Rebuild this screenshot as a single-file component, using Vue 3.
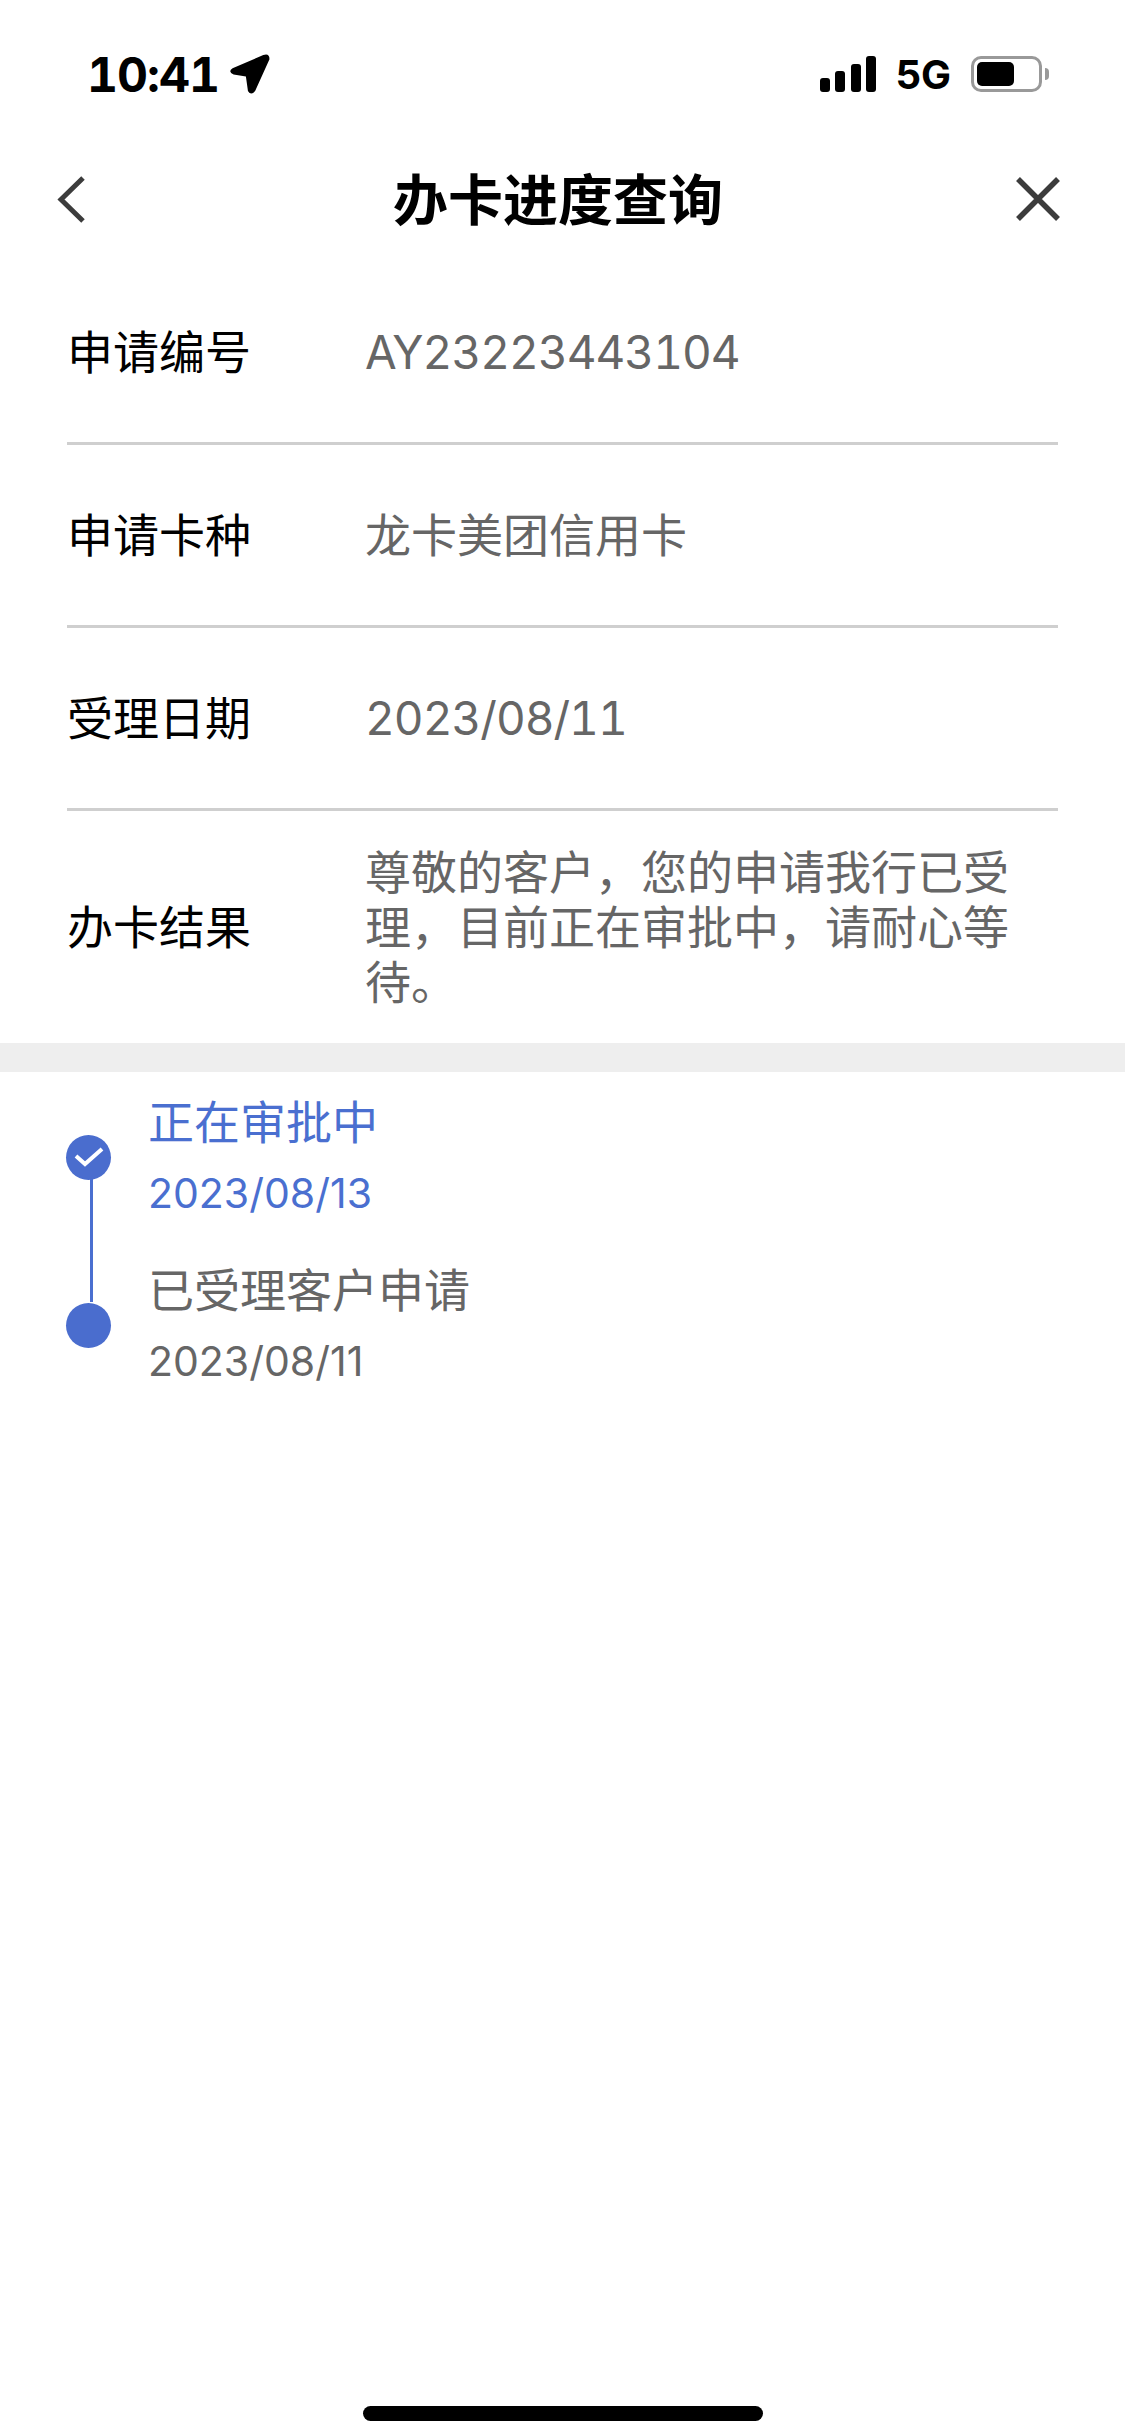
<template>
  <div class="page">
    <div class="status-bar">
      <div class="status-left">
        <span class="time">10:41</span>
        <svg class="loc" width="42" height="41" viewBox="0 0 40 40">
          <path d="M3 14 L33 1 Q39 -1 39 5 L25 36 Q21 41 18 36 L16 22 L4 20 Q-2 17 3 14Z" fill="#000" />
        </svg>
      </div>
      <div class="status-right">
        <div class="signal">
          <i style="height: 14px"></i>
          <i style="height: 21px"></i>
          <i style="height: 28px"></i>
          <i style="height: 36px"></i>
        </div>
        <span class="net">5G</span>
        <div class="battery">
          <div class="battery-level"></div>
        </div>
        <div class="battery-cap"></div>
      </div>
    </div>

    <div class="nav">
      <svg class="nav-back" width="30" height="47" viewBox="0 0 30 47">
        <path d="M27 2 L5 23.5 L27 45" fill="none" stroke="#3c3c3c" stroke-width="5" />
      </svg>
      <h1 class="nav-title">办卡进度查询</h1>
      <svg class="nav-close" width="44" height="44" viewBox="0 0 44 44">
        <path d="M2 2 L42 42 M42 2 L2 42" fill="none" stroke="#3c3c3c" stroke-width="5.5" />
      </svg>
    </div>

    <div class="info">
      <div v-for="row in rows" :key="row.label" class="info-row">
        <span class="info-label">{{ row.label }}</span>
        <span :class="['info-value', { latin: row.latin }]">{{ row.value }}</span>
      </div>
    </div>

    <div class="divider"></div>

    <div class="timeline">
      <div class="line"></div>
      <div v-for="(step, i) in steps" :key="step.title" :class="['step', { active: step.active }]">
        <div class="dot">
          <svg v-if="i === 0" width="30" height="20" viewBox="0 0 30 20">
            <path d="M2 9 L11 17 L28 2" fill="none" stroke="#fff" stroke-width="4" />
          </svg>
        </div>
        <div class="step-text">
          <div class="step-title">{{ step.title }}</div>
          <div class="step-date">{{ step.date }}</div>
        </div>
      </div>
    </div>

    <div class="home-bar"></div>
  </div>
</template>

<script setup>
const rows = [
  { label: '申请编号', value: 'AY23223443104', latin: true },
  { label: '申请卡种', value: '龙卡美团信用卡' },
  { label: '受理日期', value: '2023/08/11', latin: true },
  { label: '办卡结果', value: '尊敬的客户，您的申请我行已受理，目前正在审批中，请耐心等待。' },
]

const steps = [
  { title: '正在审批中', date: '2023/08/13', active: true },
  { title: '已受理客户申请', date: '2023/08/11', active: false },
]
</script>

<style>
html,
body {
  margin: 0;
  background: #fff;
}
</style>

<style scoped>
.page {
  position: relative;
  width: 1125px;
  height: 2435px;
  overflow: hidden;
  background: #fff;
  font-family: Inter, "Noto Sans CJK SC", sans-serif;
}

.status-bar {
  height: 136px;
  padding: 12px 76px 0 87px;
  box-sizing: border-box;
  display: flex;
  justify-content: space-between;
  align-items: center;
}

.status-left,
.status-right {
  display: flex;
  align-items: center;
}

.time {
  font-size: 48px;
  font-weight: 700;
  color: #000;
  font-variant-numeric: tabular-nums;
  letter-spacing: -1px;
}

.loc {
  margin-left: 10px;
}

.signal {
  display: flex;
  align-items: flex-end;
  gap: 5.5px;
  margin-right: 19px;
}

.signal i {
  display: block;
  width: 10px;
  background: #000;
  border-radius: 3px;
}

.net {
  font-size: 40px;
  font-weight: 700;
  color: #000;
  margin-right: 20px;
}

.battery {
  width: 71px;
  height: 36px;
  box-sizing: border-box;
  border: 3px solid #999;
  border-radius: 10px;
  padding: 3px;
}

.battery-level {
  width: 37px;
  height: 100%;
  background: #000;
  border-radius: 5px;
}

.battery-cap {
  width: 4px;
  height: 12px;
  margin-left: 3px;
  background: #999;
  border-radius: 0 4px 4px 0;
}

.nav {
  height: 126px;
  padding: 0 65px 0 56px;
  display: grid;
  grid-template-columns: 1fr auto 1fr;
  align-items: center;
}

.nav-close {
  justify-self: end;
}

.nav-title {
  margin: 0 0 6px;
  font-size: 55px;
  font-weight: 700;
  color: #000;
}

.info {
  padding: 0 67px;
}

.info-row {
  display: flex;
  align-items: center;
  height: 183px;
  border-bottom: 3px solid #cfcfcf;
  box-sizing: border-box;
}

.info-row:last-child {
  border-bottom: none;
  height: 232px;
}

.info-label {
  width: 298px;
  flex-shrink: 0;
  font-size: 46px;
  color: #000;
  margin-bottom: 6px;
}

.info-value {
  font-size: 46px;
  line-height: 55px;
  color: #666;
}

.info-value.latin {
  font-variant-numeric: tabular-nums;
  letter-spacing: -1px;
}

.divider {
  height: 29px;
  background: #eeeeee;
}

.timeline {
  position: relative;
  padding: 1px 0 0 66px;
}

.line {
  position: absolute;
  left: 90px;
  top: 107px;
  width: 3px;
  height: 123px;
  background: #4a6fd0;
}

.step {
  display: flex;
  align-items: center;
  height: 168px;
  color: #666;
}

.dot {
  width: 45px;
  height: 45px;
  flex-shrink: 0;
  border-radius: 50%;
  background: #4a6dce;
  margin-right: 37px;
  display: flex;
  align-items: center;
  justify-content: center;
}

.step-title {
  font-size: 46px;
  line-height: 70px;
}

.step-date {
  font-size: 41px;
  line-height: 70px;
  padding-top: 1px;
}

.step.active {
  color: #4a6fd0;
}

.home-bar {
  position: absolute;
  left: 363px;
  bottom: 14px;
  width: 400px;
  height: 15px;
  border-radius: 8px;
  background: #000;
}
</style>
